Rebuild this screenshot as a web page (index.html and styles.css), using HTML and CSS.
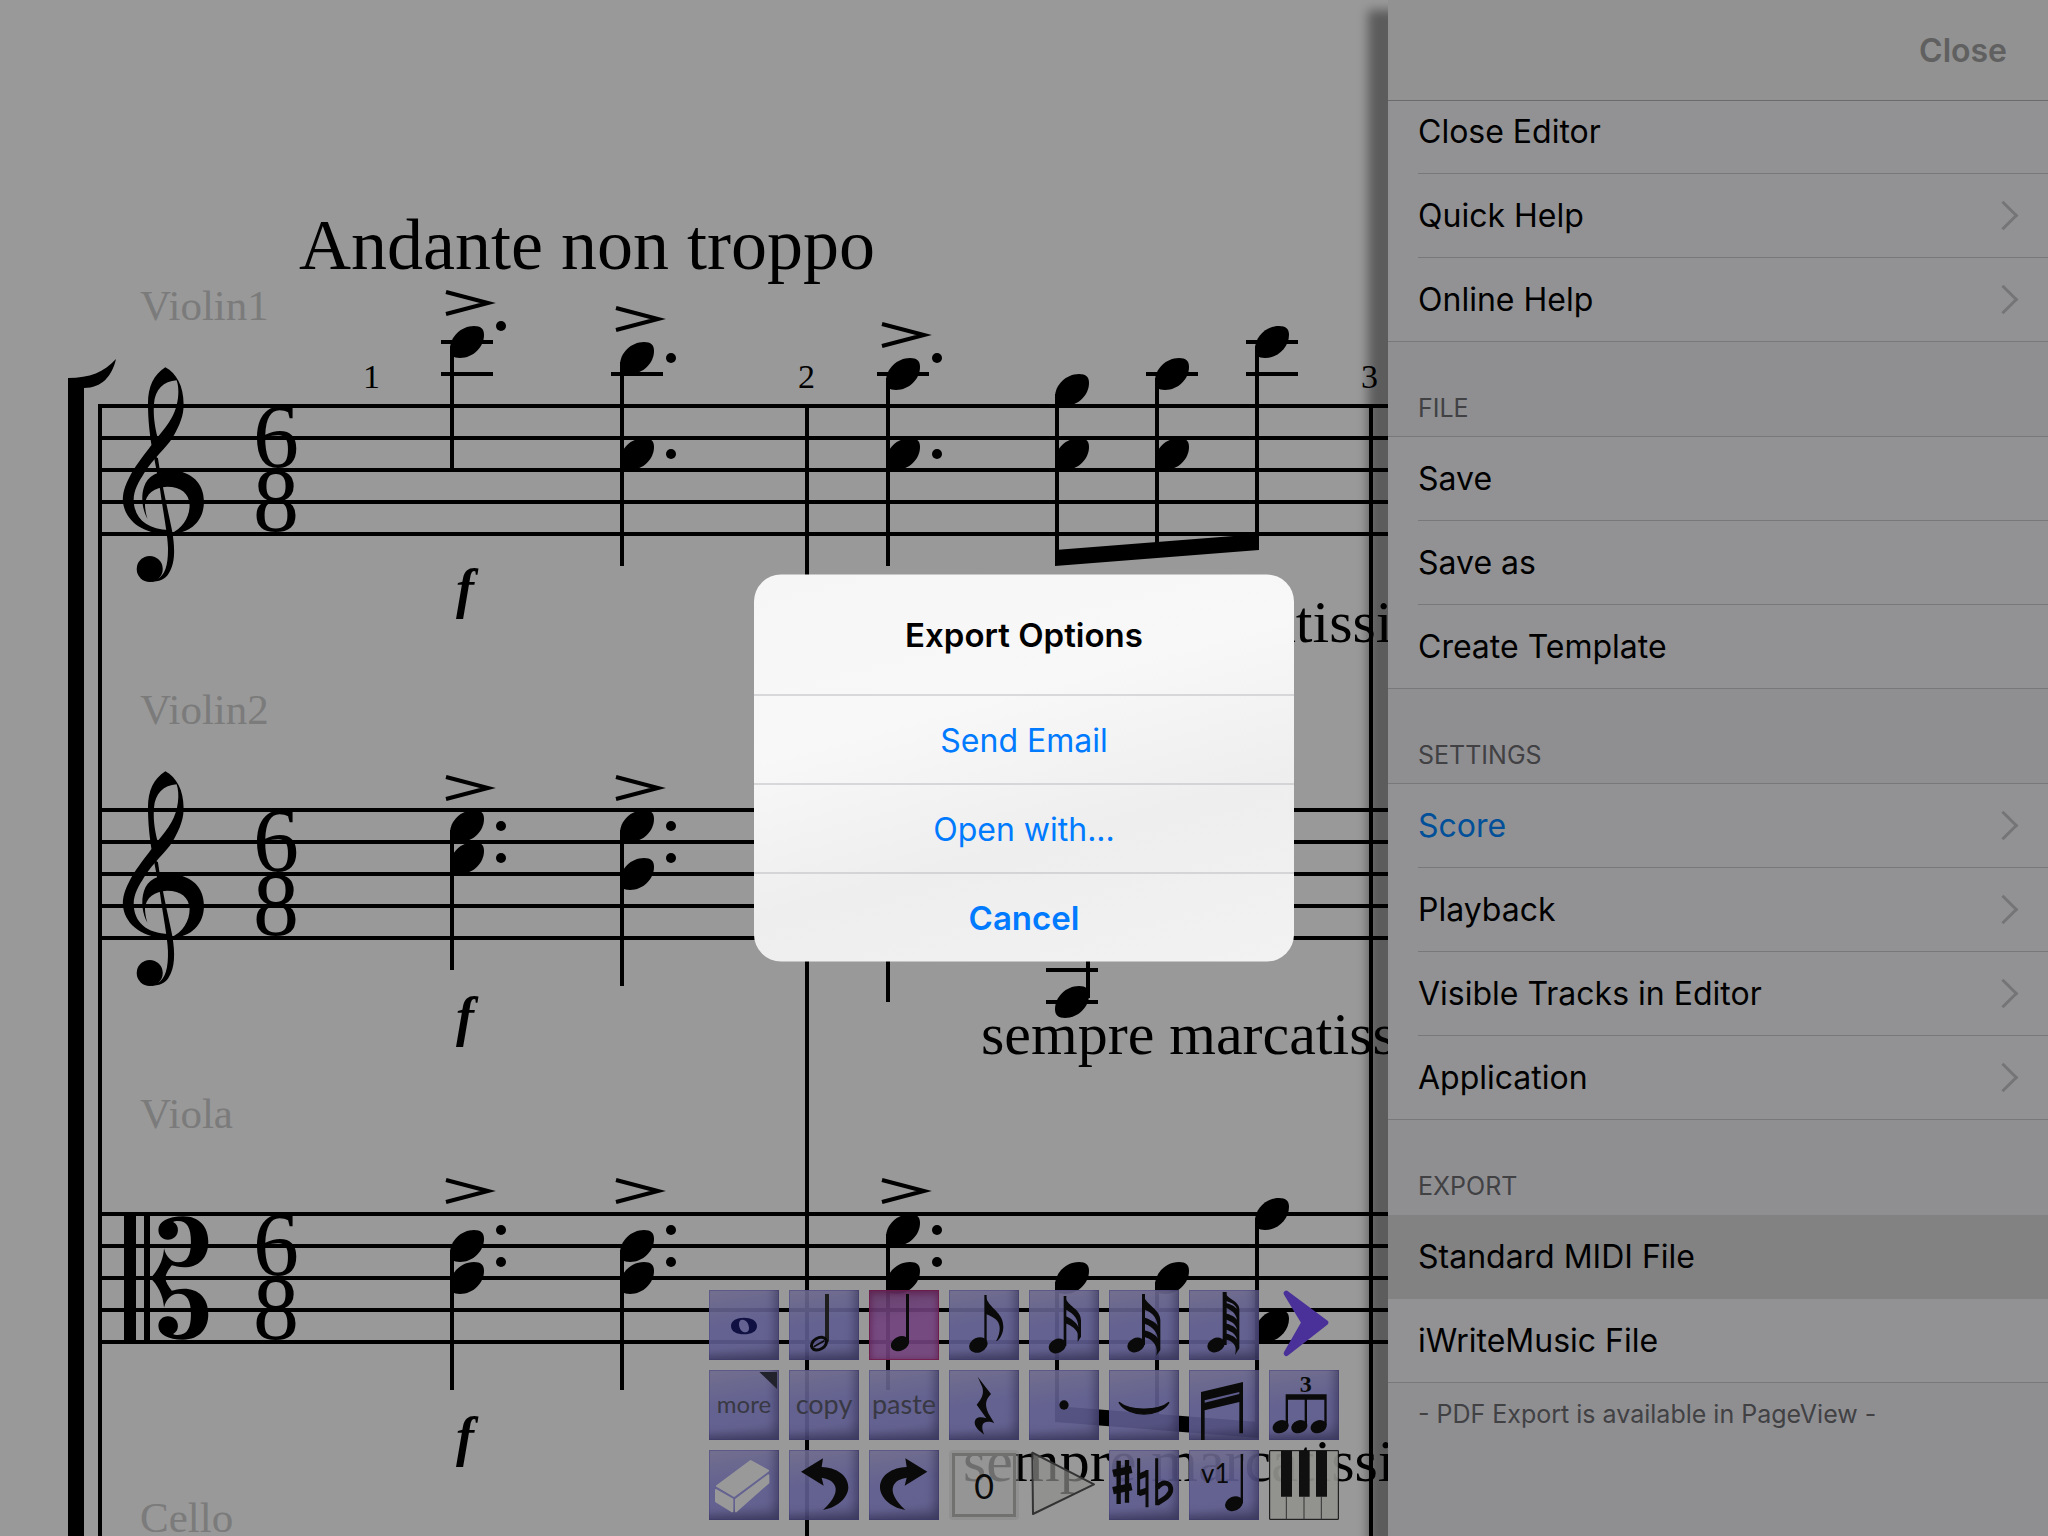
FILE: index.html
```html
<!DOCTYPE html>
<html lang="en">
<head>
    <meta charset="UTF-8">
    <title>Score Editor</title>
    <link rel="stylesheet" href="styles.css">
</head>
<body>
    <div class="app">
        <main class="score">
            <svg class="sheet" aria-label="Andante non troppo">
                <defs>
                    <path id="head" d="M-17 7 C-17 -5 -6 -16 7 -16 C14 -16 17 -13 17 -7 C17 5 6 16 -7 16 C-14 16 -17 13 -17 7Z"/>
                    <path id="accent" d="M-6 -11 L36 0 L-6 11" fill="none" stroke="#000" stroke-width="4"/>
                    <path id="ledger" d="M-11 0 H41" stroke="#000" stroke-width="4"/>
                    <path id="staff" d="M100 0 H4000 M100 32 H4000 M100 64 H4000 M100 96 H4000 M100 128 H4000" stroke="#000" stroke-width="4"/>
                    <g id="treble" transform="translate(40 -206) scale(.4337 .3333)">
                        <path fill-rule="evenodd" d="M289 502 C262 525 249 560 249 610 C249 660 253 700 257 735 C240 765 215 805 205 835 C195 860 191 880 191 900 C193 955 230 1000 290 1002 L298 990 C245 988 217 955 216 900 C216 870 228 845 240 820 C262 775 290 745 305 715 C325 670 332 640 331 610 C331 560 315 520 289 502Z M271 712 C263 670 261 640 263 610 C265 570 285 543 315 541 C323 570 319 620 303 655 C295 675 283 692 271 712Z"/>
                        <path d="M262 765 L272 775 C280 850 295 930 305 995 C312 1050 311 1090 297 1120 C290 1137 275 1146 253 1146 L270 1138 C290 1125 296 1090 295 1040 C294 1000 283 930 277 870Z"/>
                        <ellipse cx="253" cy="1107" rx="30" ry="39"/>
                        <path d="M248 957 C236 930 232 890 240 860 C248 830 270 812 305 811 C350 815 378 850 378 905 C378 960 350 1000 300 1002 C330 985 345 950 345 915 C344 880 325 860 293 860 C265 862 243 880 242 915 C243 935 245 945 248 957Z"/>
                    </g>
                    <path id="altoHalf" d="M273 240 C273 215 295 199 330 199 C368 199 388 232 388 275 C388 325 365 352 332 352 C320 352 310 348 304 346 C296 360 290 370 289 385 L254 385 C270 365 284 335 286 295 C290 320 303 337 318 337 C340 337 348 315 348 275 C348 235 340 213 318 213 C313 213 309 214 307 216 C315 222 318 230 318 240 C318 257 308 269 295 269 C282 269 273 257 273 240Z"/>
                </defs>

                <!-- bracket and barlines -->
                <path d="M68 378 C90 378 104 372 116 359 C112 376 102 388 84 388 V4000 H68Z"/>
                <path d="M100 404 V4000 M807 406 V4000 M1371 406 V4000" stroke="#000" stroke-width="4"/>

                <!-- Violin1 -->
                <use href="#staff" y="406"/>
                <use href="#treble" y="406"/>
                <text class="title" x="299" y="269">Andante non troppo</text>
                <text class="track" x="140" y="320">Violin1</text>
                <text class="meter" x="253" y="467">6</text>
                <text class="meter" x="253" y="531">8</text>
                <text class="measure" x="363" y="388">1</text>
                <text class="measure" x="798" y="388">2</text>
                <text class="measure" x="1361" y="388">3</text>
                <text class="dynamic" x="456" y="607">f</text>
                <text class="lyric" x="961" y="642">sempre marcatissimo</text>
                <use href="#accent" x="452" y="303"/>
                <use href="#accent" x="622" y="319"/>
                <use href="#accent" x="888" y="335"/>
                <g>
                    <use href="#ledger" x="452" y="342"/><use href="#ledger" x="452" y="374"/>
                    <use href="#ledger" x="622" y="374"/><use href="#ledger" x="888" y="374"/>
                    <use href="#ledger" x="1157" y="374"/>
                    <use href="#ledger" x="1257" y="342"/><use href="#ledger" x="1257" y="374"/>
                    <use href="#head" x="467" y="342"/>
                    <use href="#head" x="637" y="358"/><use href="#head" x="637" y="454"/>
                    <use href="#head" x="903" y="374"/><use href="#head" x="903" y="454"/>
                    <use href="#head" x="1072" y="390"/><use href="#head" x="1072" y="454"/>
                    <use href="#head" x="1172" y="374"/><use href="#head" x="1172" y="454"/>
                    <use href="#head" x="1272" y="342"/>
                    <path class="stem" d="M452 346 V468 M622 362 V566 M888 378 V566 M1057 394 V560 M1157 378 V550 M1257 346 V545"/>
                    <path d="M1055 550 L1259 534 V550 L1055 566Z"/>
                    <circle cx="501" cy="326" r="5"/><circle cx="671" cy="358" r="5"/><circle cx="671" cy="454" r="5"/>
                    <circle cx="937" cy="358" r="5"/><circle cx="937" cy="454" r="5"/>
                </g>

                <!-- Violin2 -->
                <use href="#staff" y="810"/>
                <use href="#treble" y="810"/>
                <text class="track" x="140" y="724">Violin2</text>
                <text class="meter" x="253" y="871">6</text>
                <text class="meter" x="253" y="935">8</text>
                <text class="dynamic" x="456" y="1035">f</text>
                <text class="lyric" x="981" y="1054">sempre marcatissimo</text>
                <use href="#accent" x="452" y="788"/>
                <use href="#accent" x="622" y="788"/>
                <g>
                    <use href="#ledger" x="1057" y="970"/><use href="#ledger" x="1057" y="1002"/>
                    <use href="#head" x="467" y="826"/><use href="#head" x="467" y="858"/>
                    <use href="#head" x="637" y="826"/><use href="#head" x="637" y="874"/>
                    <use href="#head" x="1072" y="1002"/>
                    <path class="stem" d="M452 830 V970 M622 830 V986 M888 830 V1002 M1088 850 V998"/>
                    <circle cx="501" cy="826" r="5"/><circle cx="501" cy="858" r="5"/>
                    <circle cx="671" cy="826" r="5"/><circle cx="671" cy="858" r="5"/>
                </g>

                <!-- Viola -->
                <use href="#staff" y="1214"/>
                <path d="M124 1214 H136 V1342 H124Z M144 1214 H150 V1342 H144Z"/>
                <g transform="translate(40 1150) scale(.4337 .3333)">
                    <use href="#altoHalf"/>
                    <use href="#altoHalf" transform="translate(0 768) scale(1 -1)"/>
                </g>
                <text class="track" x="140" y="1128">Viola</text>
                <text class="meter" x="253" y="1275">6</text>
                <text class="meter" x="253" y="1339">8</text>
                <text class="dynamic" x="456" y="1455">f</text>
                <text class="lyric" x="963" y="1481">sempre marcatissimo</text>
                <use href="#accent" x="452" y="1191"/>
                <use href="#accent" x="622" y="1191"/>
                <use href="#accent" x="888" y="1191"/>
                <g>
                    <use href="#head" x="467" y="1246"/><use href="#head" x="467" y="1278"/>
                    <use href="#head" x="637" y="1246"/><use href="#head" x="637" y="1278"/>
                    <use href="#head" x="903" y="1230"/><use href="#head" x="903" y="1278"/>
                    <use href="#head" x="1072" y="1278"/><use href="#head" x="1172" y="1278"/>
                    <use href="#head" x="1272" y="1214"/><use href="#head" x="1272" y="1326"/>
                    <path class="stem" d="M452 1250 V1390 M622 1250 V1390 M888 1234 V1390 M1057 1282 V1410 M1157 1282 V1418 M1257 1218 V1430"/>
                    <path d="M1055 1406 L1259 1422 V1438 L1055 1422Z"/>
                    <circle cx="501" cy="1230" r="5"/><circle cx="501" cy="1262" r="5"/>
                    <circle cx="671" cy="1230" r="5"/><circle cx="671" cy="1262" r="5"/>
                    <circle cx="937" cy="1230" r="5"/><circle cx="937" cy="1262" r="5"/>
                </g>

                <text class="track" x="140" y="1532">Cello</text>
            </svg>
        </main>

        <aside class="drawer">
            <header class="drawer-bar">
                <button class="close">Close</button>
            </header>
            <nav class="menu">
                <div class="group first">
                    <button class="row">Close Editor</button>
                    <button class="row more">Quick Help</button>
                    <button class="row more">Online Help</button>
                </div>
                <h2>FILE</h2>
                <div class="group">
                    <button class="row">Save</button>
                    <button class="row">Save as</button>
                    <button class="row">Create Template</button>
                </div>
                <h2>SETTINGS</h2>
                <div class="group">
                    <button class="row more current">Score</button>
                    <button class="row more">Playback</button>
                    <button class="row more">Visible Tracks in Editor</button>
                    <button class="row more">Application</button>
                </div>
                <h2 class="plain">EXPORT</h2>
                <div class="group">
                    <button class="row selected">Standard MIDI File</button>
                    <button class="row">iWriteMusic File</button>
                </div>
                <p class="note">- PDF Export is available in PageView -</p>
            </nav>
        </aside>

        <div class="palette">
            <button class="key" aria-label="Whole note"><svg viewBox="0 0 210 210"><path fill="#1b1b6e" fill-rule="evenodd" d="M66 108 C66 91 84 83 105 83 C126 83 144 91 144 108 C144 125 126 133 105 133 C84 133 66 125 66 108Z M90 102 C90 116 99 127 109 127 C117 127 120 121 120 114 C120 101 111 89 101 89 C93 89 90 95 90 102Z"/></svg></button>
            <button class="key" aria-label="Half note"><svg viewBox="0 0 210 210"><path fill="#333" d="M108 12 H120 V155 H108Z"/><ellipse cx="90" cy="161" rx="24" ry="17" transform="rotate(-30 90 161)" fill="none" stroke="#111" stroke-width="9"/><path d="M74 170 L106 152" stroke="#111" stroke-width="5"/></svg></button>
            <button class="key active" aria-label="Quarter note"><svg viewBox="0 0 210 210"><path d="M111 12 H120 V160 H111Z"/><ellipse cx="93" cy="161" rx="29" ry="21" transform="rotate(-25 93 161)"/></svg></button>
            <button class="key" aria-label="Eighth note"><svg viewBox="0 0 210 210"><path d="M106 15 H113 V165 H106Z"/><ellipse cx="88" cy="165" rx="29" ry="22" transform="rotate(-25 88 165)"/><path d="M110 18 C118 55 163 65 163 110 C163 130 152 150 141 154 C157 125 155 100 140 88 C130 80 118 74 110 72Z"/></svg></button>
            <button class="key" aria-label="Sixteenth note"><svg viewBox="0 0 210 210"><path d="M104 18 H112 V168 H104Z"/><ellipse cx="85" cy="168" rx="27" ry="21" transform="rotate(-25 85 168)"/><path d="M108 20 C116 50 156 55 156 92 L156 140 L146 156 V138 C150 122 124 104 108 100 V78 C128 84 148 104 148 112 C148 80 124 66 108 58Z"/></svg></button>
            <button class="key" aria-label="Thirty-second note"><svg viewBox="0 0 210 210"><path d="M99 12 H108 V165 H99Z"/><ellipse cx="81" cy="165" rx="27" ry="21" transform="rotate(-25 81 165)"/><path d="M103 14 C110 44 154 58 154 90 V180 L142 197 C150 160 122 144 103 140 V120 C124 124 144 138 146 146 C144 120 122 106 103 100 V82 C124 88 144 100 146 108 C144 78 122 64 103 58Z"/></svg></button>
            <button class="key" aria-label="Sixty-fourth note"><svg viewBox="0 0 210 210"><path d="M101 6 H113 V165 H101Z"/><ellipse cx="81" cy="165" rx="27" ry="21" transform="rotate(-25 81 165)"/><path d="M107 6 C112 26 151 32 151 58 V175 L138 195 C148 160 124 152 107 148 V130 C124 132 142 144 144 150 C142 132 124 122 107 118 V100 C124 102 142 114 144 120 C142 102 124 92 107 88 V70 C124 72 142 84 144 90 C142 70 124 58 107 52 V38 C124 40 142 52 144 58 C140 42 124 36 107 32Z"/></svg></button>
            <button class="key bare" aria-label="Next page"><svg viewBox="0 0 210 210"><path d="M52 10 L170 98 L52 190 L105 98Z" fill="#7c52ff" stroke="#7c52ff" stroke-width="16" stroke-linejoin="round"/></svg></button>

            <button class="key label small"><svg class="corner" viewBox="0 0 210 210"><path fill="#3a3a4c" d="M151 6 H204 V57Z"/></svg>more</button>
            <button class="key label">copy</button>
            <button class="key label">paste</button>
            <button class="key" aria-label="Rest"><svg viewBox="0 0 210 210"><path d="M86 20 L126 72 C112 88 105 100 118 130 L136 160 C118 152 102 155 100 168 C99 178 102 186 106 194 C90 182 78 172 77 158 C78 142 92 138 112 145 L83 104 C100 85 105 70 100 52Z"/></svg></button>
            <button class="key" aria-label="Dot"><svg viewBox="0 0 210 210"><circle cx="105" cy="105" r="14"/></svg></button>
            <button class="key" aria-label="Tie"><svg viewBox="0 0 210 210"><path d="M30 97 C58 144 152 144 180 97 C150 124 60 124 30 97Z" stroke="#111" stroke-width="4"/></svg></button>
            <button class="key" aria-label="Beam"><svg viewBox="0 0 210 210"><path d="M36 66 L162 36 V190 H151 V96 L47 121 V210 H36Z"/><path fill="#9d99e8" d="M47 91 L151 66 V72 L47 98Z"/></svg></button>
            <button class="key" aria-label="Triplet"><svg viewBox="0 0 210 210"><text class="tuplet" x="110" y="65">3</text><path d="M50 73 H173 V165 H166 V89 H114 V165 H107 V89 H57 V165 H50Z"/><ellipse cx="35" cy="170" rx="25" ry="19" transform="rotate(-20 35 170)"/><ellipse cx="91" cy="170" rx="25" ry="19" transform="rotate(-20 91 170)"/><ellipse cx="149" cy="170" rx="25" ry="19" transform="rotate(-20 149 170)"/></svg></button>

            <button class="key" aria-label="Eraser"><svg viewBox="0 0 210 210"><g fill="#fff" stroke="#fff" stroke-width="6" stroke-linejoin="round"><path d="M24 108 L125 33 L177 62 L75 138Z"/><path d="M21 120 L70 148 V184 L21 154Z"/><path d="M81 149 L178 76 V98 L81 184Z"/></g></svg></button>
            <button class="key" aria-label="Undo"><svg viewBox="0 0 210 210"><path d="M36 65 L102 25 L98 51 C140 52 178 75 178 112 C178 140 150 172 102 180 C135 150 145 125 138 108 C132 92 115 86 98 83 L104 107Z"/></svg></button>
            <button class="key" aria-label="Redo"><svg viewBox="0 0 210 210"><path transform="translate(211 0) scale(-1 1)" d="M36 65 L102 25 L98 51 C140 52 178 75 178 112 C178 140 150 172 102 180 C135 150 145 125 138 108 C132 92 115 86 98 83 L104 107Z"/></svg></button>
            <button class="key counter"><span>0</span></button>
            <button class="key bare" aria-label="Play"><svg viewBox="0 0 210 210"><path d="M10 8 L195 103 L12 192Z" fill="#ecece8" fill-opacity=".7" stroke="#555" stroke-width="6" stroke-linejoin="round"/></svg></button>
            <button class="key" aria-label="Accidentals"><svg viewBox="0 0 210 210"><g fill="none" stroke="#111"><path stroke-width="13" d="M29 32 V162 M54 30 V158"/><path stroke-width="9" d="M89 25 V135 M114 60 V172 M143 25 V166"/><path stroke-width="22" d="M12 70 L68 58 M12 122 L68 110"/><path stroke-width="18" d="M89 80 L114 70 M89 130 L114 122"/><path stroke-width="15" d="M144 114 C165 88 188 100 185 122 C182 140 160 150 144 160"/></g></svg></button>
            <button class="key" aria-label="Voice 1"><svg viewBox="0 0 210 210"><text class="voice" x="36" y="100">v1</text><path d="M155 12 H162 V160 H155Z"/><ellipse cx="135" cy="161" rx="28" ry="21" transform="rotate(-25 135 161)"/></svg></button>
            <button class="key bare" aria-label="Keyboard"><svg viewBox="0 0 210 210"><path d="M2 2 H208 V208 H2Z" fill="#f2f2ee" fill-opacity=".92" stroke="#111" stroke-width="3"/><path d="M52 140 V208 M105 140 V208 M157 140 V208" stroke="#555" stroke-width="3"/><path fill="#1c1c1c" d="M36 2 H69 V140 H36Z M90 2 H122 V140 H90Z M141 2 H174 V140 H141Z"/></svg></button>
        </div>

        <div class="dim"></div>

        <div class="alert" role="dialog" aria-labelledby="alertTitle">
            <h1 id="alertTitle">Export Options</h1>
            <button>Send Email</button>
            <button>Open with...</button>
            <button class="cancel">Cancel</button>
        </div>
    </div>
</body>
</html>
```
FILE: styles.css
```css
* {
    box-sizing: border-box;
}
body {
    margin: 0;
    font-family: Inter, "Liberation Sans", sans-serif;
    background: #fff;
}
button {
    margin: 0;
    padding: 0;
    border: none;
    background: none;
    font-family: inherit;
    cursor: pointer;
}
.app {
    position: relative;
    display: flex;
    height: 100vh;
    overflow: hidden;
}

/* score */
.score {
    flex: 1;
    min-width: 0;
}
.sheet {
    display: block;
    width: 100%;
    height: 100%;
    font-family: "Liberation Serif", serif;
}
.sheet .title {
    font-size: 72px;
}
.sheet .track {
    font-size: 43px;
    fill: #cdcdcd;
}
.sheet .meter {
    font-size: 92px;
}
.sheet .measure {
    font-size: 34px;
}
.sheet .dynamic {
    font-size: 54px;
    font-weight: bold;
    font-style: italic;
}
.sheet .lyric {
    font-size: 60px;
}
.stem {
    stroke: #000;
    stroke-width: 4;
}

/* side menu */
.drawer {
    width: 660px;
    background: #efeff4;
    box-shadow: -20px 10px 10px rgba(0,0,0,0.4);
}
.drawer-bar {
    position: relative;
    display: flex;
    justify-content: flex-end;
    align-items: center;
    height: 101px;
    padding: 0 41px;
    background: #f4f4f4;
    border-bottom: 1px solid #b2b2b2;
}
.close {
    font-size: 32px;
    font-weight: 600;
    color: #a0a0a0;
}
.group {
    background: #f4f4f7;
}
.first {
    margin-top: -11px;
}
.row {
    position: relative;
    display: flex;
    align-items: center;
    justify-content: space-between;
    width: 100%;
    height: 84px;
    padding: 0 34px 2px 30px;
    font-size: 32px;
    color: #000;
    text-align: left;
}
.row::before {
    content: "";
    position: absolute;
    left: 30px;
    right: 0;
    bottom: 0;
    height: 1px;
    background: #c8c7cc;
}
.row:last-child::before {
    left: 0;
}
.more::after {
    content: "";
    width: 18px;
    height: 18px;
    border-top: 3px solid #c3c3c8;
    border-right: 3px solid #c3c3c8;
    transform: rotate(45deg);
}
.current {
    color: #0084ff;
}
.selected {
    background: #d9d9d9;
}
.selected::before {
    display: none;
}
h2 {
    height: 95px;
    margin: 0;
    padding: 49px 30px 0;
    border-bottom: 1px solid #c8c7cc;
    font-size: 25px;
    line-height: 34px;
    font-weight: 400;
    color: #6d6d72;
}
.plain {
    border-bottom-color: #efeff4;
}
.note {
    margin: 0;
    padding: 14px 30px;
    font-size: 25px;
    line-height: 34px;
    color: #6d6d72;
}

/* note palette */
.palette {
    position: absolute;
    left: 50%;
    bottom: 16px;
    transform: translateX(-50%);
    display: grid;
    grid-template-columns: repeat(8, 70px);
    grid-auto-rows: 70px;
    gap: 10px;
}
.key {
    position: relative;
    background: linear-gradient(170deg, rgba(184,178,235,0.9), rgba(158,154,240,0.9) 45%, rgba(156,152,238,0.9) 75%, rgba(120,117,185,0.9));
    box-shadow: inset -8px -8px 9px -3px rgba(50,45,100,0.4), inset 0 0 0 1px rgba(130,125,220,0.6);
    color: #111;
}
.key svg {
    display: block;
    width: 70px;
    height: 70px;
    fill: #111;
}
.active {
    background: linear-gradient(170deg, rgba(160,95,170,0.9), rgba(190,110,212,0.9) 45%, rgba(190,110,205,0.9));
    box-shadow: inset 0 2px 6px 2px rgba(150,30,110,0.6), inset 0 0 0 1px #d0408f;
}
.bare {
    background: none;
    box-shadow: none;
}
.label {
    padding-bottom: 3px;
    font-family: Lato, sans-serif;
    font-size: 27px;
    color: #5e5e70;
}
.small {
    font-size: 24px;
}
.key .corner {
    position: absolute;
    top: 0;
    left: 0;
}
.counter {
    padding: 3px;
    background: rgba(225,225,225,0.5);
    box-shadow: none;
    border-radius: 4px;
}
.counter span {
    display: flex;
    align-items: center;
    justify-content: center;
    height: 64px;
    border: 3px solid #bdbdbb;
    background: rgba(255,255,255,0.5);
    font-family: Lato, sans-serif;
    font-size: 34px;
}
.tuplet {
    font-family: "Liberation Serif", serif;
    font-size: 72px;
    font-weight: bold;
    text-anchor: middle;
}
.voice {
    font-family: Lato, sans-serif;
    font-size: 78px;
}

/* alert */
.dim {
    position: absolute;
    inset: 0;
    background: rgba(0,0,0,0.4);
}
.alert {
    position: absolute;
    top: 50%;
    left: 50%;
    transform: translate(-50%, -50%);
    width: 540px;
    border-radius: 27px;
    overflow: hidden;
    background: linear-gradient(165deg, #f6f6f6, #f8f8f8 35%, #eee 65%, #f2f2f2);
}
.alert h1 {
    margin: 0;
    font-size: 33px;
    line-height: 120px;
    font-weight: 600;
    text-align: center;
}
.alert button {
    display: block;
    width: 100%;
    height: 89px;
    border-top: 1px solid #b9b9be;
    font-size: 32px;
    color: #007aff;
}
.alert .cancel {
    font-size: 33px;
    font-weight: 600;
}
```
